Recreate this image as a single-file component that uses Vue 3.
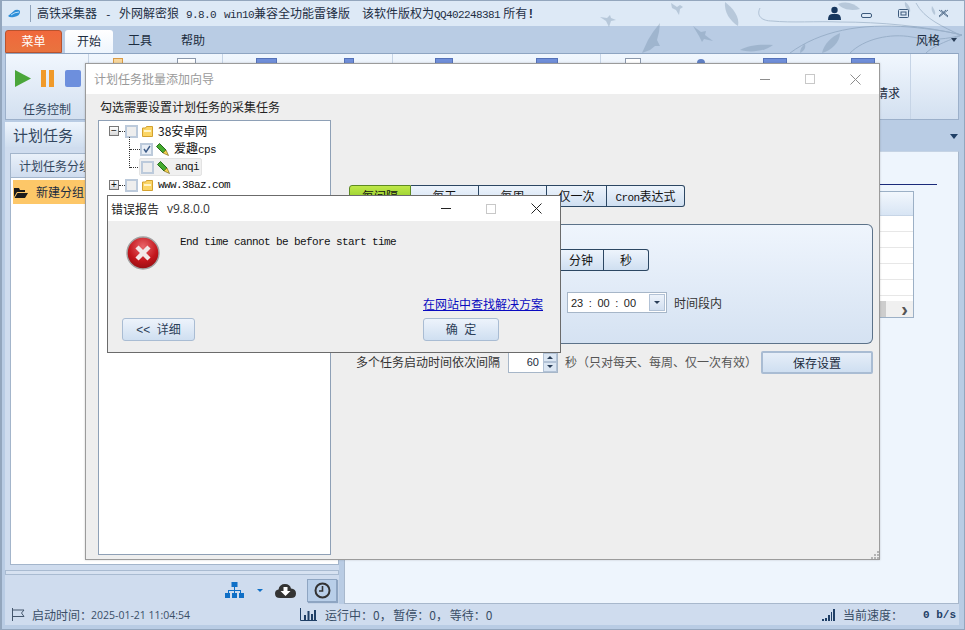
<template>
  <div class="app">
    <svg class="bg-art" width="365" height="53" viewBox="600 0 365 53">
      <g fill="#6f8aa6" opacity="0.34">
        <path d="M600 17 l7 1 l3 -3 l1 3 l5 2 l-5 1 l-2 6 l-3 -6 z" />
        <path d="M671 3 l6 4 l3 -2 l3 2 l-3 2 l-1 6 l-3 -5 l-4 -2 z" />
        <path d="M660 23 l-7 9 l-5 8 l-6 13 l8 -3 l5 -4 l5 0 l-3 -6 l2 -8 z" />
        <path d="M693 26 l8 6 l5 -1 l-1 4 l8 6 l-9 -2 l-2 3 l-3 -6 z" />
        <path d="M725 2 c8 6 15 15 13 24 c-8 -5 -14 -14 -13 -24 z" />
        <path d="M740 50 c8 -5 22 -6 33 -5 c-7 6 -22 8 -33 5 z" />
        <path d="M822 53 c2 -9 9 -16 18 -20 c0 9 -8 17 -18 20 z" />
        <path d="M838 4 c8 -3 16 -1 22 5 c-8 2 -17 1 -22 -5 z" />
        <path d="M905 2 c3 2 6 6 5 10 c-3 -2 -6 -6 -5 -10 z" />
        <path d="M932 6 c2 3 4 6 3 9 c-3 -2 -4 -6 -3 -9 z" />
        <path d="M800 53 c0 -4 2 -7 5 -9 c1 4 -1 7 -5 9 z" />
      </g>
      <g fill="none" stroke="#6f8aa6" stroke-width="1" opacity="0.42">
        <path d="M760 8 c-4 8 2 13 12 13 c20 2 44 0 68 1 c40 0 84 4 122 13" />
        <path d="M790 53 c30 -22 70 -30 120 -26 c20 2 36 4 52 8" />
        <path d="M850 53 c14 -14 40 -20 62 -16 c20 4 36 2 50 -2" />
        <path d="M960 35 c-16 -8 -36 -16 -44 -32" />
        <path d="M962 35 c-20 8 -30 12 -36 18" />
      </g>
    </svg>

    <header class="titlebar">
      <svg class="logo" width="14" height="10" viewBox="0 0 14 10">
        <path d="M1 7 L8 1 Q13 0 13 3 Q13 7 7 8 Q3 9 1 7 Z" fill="#2f8fd8" />
        <path d="M4 6 Q8 3 12 3" stroke="#bfe2fa" fill="none" />
      </svg>
      <span class="title-div"></span>
      <span class="title-text">高铁采集器<span class="mono dash">-</span>外网解密狼<span class="mono ver">9.8.0</span><span class="mono win">win10</span>兼容全功能雷锋版<span class="copy">该软件版权为</span><span class="mono">QQ402248381</span><span class="owner">所有</span><span class="bang">!</span></span>
      <svg class="user" width="13" height="15" viewBox="0 0 13 15">
        <circle cx="6.5" cy="4" r="3.2" fill="#17375e" />
        <path d="M0 14 Q0 8 4 8 L9 8 Q13 8 13 14 Z" fill="#17375e" />
      </svg>
      <svg class="sys-btn min" width="11" height="6" viewBox="0 0 11 6"><rect x="0.5" y="0.5" width="10" height="4" rx="1.5" fill="none" stroke="#3c5a7c" /></svg>
      <svg class="sys-btn restore" width="11" height="9" viewBox="0 0 11 9"><rect x="0.5" y="0.5" width="10" height="8" rx="1" fill="none" stroke="#3c5a7c" /><rect x="3" y="3" width="5" height="3" fill="none" stroke="#3c5a7c" /></svg>
      <svg class="sys-btn close" width="11" height="9" viewBox="0 0 11 9"><path d="M1 1 L10 8 M10 1 L1 8 M3 1 L10 7 M8 1 L1 7" stroke="#5b7592" fill="none" /></svg>
    </header>

    <nav class="tabs">
      <span class="tab-menu">菜单</span>
      <span class="tab-on">开始</span>
      <span class="tab-plain tools">工具</span>
      <span class="tab-plain help">帮助</span>
      <span class="style-menu">风格</span>
      <span class="caret"></span>
    </nav>

    <section class="ribbon">
      <div class="rb-group first">
        <div class="ctrl-icons">
          <svg width="16" height="17" viewBox="0 0 16 17"><path d="M0 0 L16 8.5 L0 17 Z" fill="#4aa63a" /></svg>
          <svg width="14" height="17" viewBox="0 0 14 17"><rect width="5" height="17" fill="#f09a2a" /><rect x="8" width="5" height="17" fill="#f09a2a" /></svg>
          <span class="stop"></span>
        </div>
        <div class="rb-label">任务控制</div>
      </div>
      <div v-for="g in groups" :key="g.id" class="rb-group" :style="{ width: g.width + 'px' }">
        <span
          v-for="t in g.tools"
          :key="t.left"
          class="tool"
          :class="t.kind"
          :style="{ marginLeft: t.gap + 'px', width: t.width + 'px' }"
        ></span>
        <span v-if="g.text" class="rb-text">{{ g.text }}</span>
      </div>
      <div class="rb-group last"></div>
    </section>

    <div class="workspace">
      <aside class="left-col">
        <div class="sec-title">计划任务</div>
        <div class="left-tab">计划任务分组</div>
        <div class="left-list">
          <div class="group-row">
            <svg width="14" height="11" viewBox="0 0 14 11"><path d="M0 1 L5 1 L6 3 L11 3 L11 5 L3 5 L0 10 Z M3.5 6 L14 6 L11 11 L0.5 11 Z" fill="#1b1b1b" /></svg>
            <span>新建分组</span>
          </div>
        </div>
        <div class="splitter"></div>
        <div class="left-tools">
          <svg width="19" height="17" viewBox="0 0 19 17" fill="#0f6fc6">
            <rect x="6.5" y="0" width="6" height="5" />
            <path d="M9 5 h1 v3 h6 v3 h-1 v-2 h-5 v2 h-1 v-2 h-5 v2 h-1 v-3 h6 z" />
            <rect x="0" y="11" width="5" height="5" /><rect x="7" y="11" width="5" height="5" /><rect x="14" y="11" width="5" height="5" />
          </svg>
          <span class="mini-caret"></span>
          <svg width="21" height="15" viewBox="0 0 21 15">
            <path d="M5 15 Q0 15 0 10.5 Q0 7 3.5 6.5 Q4.5 1 10 1 Q15 1 16 5.5 Q21 6 21 10.5 Q21 15 16 15 Z" fill="#333" />
            <path d="M8.5 4 h4 v4 h3 l-5 5 l-5 -5 h3 z" fill="#fff" />
          </svg>
          <span class="clock-btn">
            <svg width="17" height="17" viewBox="0 0 17 17">
              <circle cx="8.5" cy="8.5" r="7" fill="none" stroke="#333" stroke-width="2" />
              <path d="M8.5 4 V9 H5" fill="none" stroke="#333" stroke-width="1.6" />
            </svg>
          </span>
        </div>
      </aside>
      <main class="right-col">
        <div class="right-head"><span class="head-caret"></span></div>
        <div class="right-panel">
          <div class="navy-line"></div>
          <div class="grid-box">
            <div class="grid-head"></div>
            <div v-for="n in 5" :key="n" class="grid-row"></div>
            <div class="grid-fill"></div>
            <div class="grid-scroll"><span class="scroll-thumb"></span><span class="scroll-arrow">›</span></div>
          </div>
        </div>
      </main>
    </div>

    <footer class="statusbar">
      <svg class="st-flag" width="14" height="13" viewBox="0 0 14 13"><path d="M1.5 0 V13 M1.5 2 H13 L10.5 5 L13 8.5 H1.5" fill="none" stroke="#44566c" /></svg>
      <span class="st-label">启动时间：</span>
      <span class="st-date">2025-01-21 11:04:54</span>
      <svg class="st-chart" width="17" height="13" viewBox="0 0 17 13"><path d="M0.5 0 V12.5 H17" fill="none" stroke="#1f3f66" /><path d="M4 7 h2 v5 h-2 z M7.5 3 h2 v9 h-2 z M11 6 h2 v6 h-2 z M14 2 h2 v10 h-2 z" fill="#1f3f66" /></svg>
      <span class="st-run">运行中：0， 暂停：0， 等待：0</span>
      <svg class="st-signal" width="13" height="12" viewBox="0 0 13 12"><path d="M0 10 h2 v2 h-2 z M3 9 h2 v3 h-2 z M6 6 h2 v6 h-2 z M9 3 h1 v9 h-1 z M11 0 h2 v12 h-2 z" fill="#1f3f66" /></svg>
      <span class="st-speed">当前速度：</span>
      <span class="st-rate">0 b/s</span>
    </footer>
    <div class="bottom-strip"></div>

    <!-- 批量添加向导 -->
    <div class="wizard">
      <div class="wiz-title">
        <span class="wiz-name">计划任务批量添加向导</span>
        <span class="win-min faded"></span>
        <span class="win-max faded"></span>
        <svg class="win-x" width="11" height="11" viewBox="0 0 11 11"><path d="M0.5 0.5 L10.5 10.5 M10.5 0.5 L0.5 10.5" stroke="#8d8d8d" fill="none" /></svg>
      </div>
      <div class="wiz-body">
        <div class="wiz-hint">勾选需要设置计划任务的采集任务</div>
        <div class="wiz-main">
          <div class="tree">
            <span class="tree-line"></span>
            <div class="tree-row">
              <span class="expander">−</span><span class="dots"></span><span class="check"></span>
              <svg class="folder" width="11" height="11" viewBox="0 0 11 11"><path d="M0.5 2 H3.5 L4.5 0.5 H10.5 V10.5 H0.5 Z" fill="#fbd564" stroke="#d3a12f" /><path d="M2 4 H9 V6 H2 Z" fill="#fff4c8" /></svg>
              <span class="node-text">38安卓网</span>
            </div>
            <div class="tree-row child">
              <span class="dots wide"></span><span class="check on">
                <svg width="8" height="8" viewBox="0 0 8 8"><path d="M1 4 L3 7 L7 1" fill="none" stroke="#3d5c88" stroke-width="1.4" /></svg>
              </span>
              <svg class="pencil" width="13" height="13" viewBox="0 0 13 13"><path d="M0.5 3.5 L3.5 0.5 L10 7 L7 10 Z" fill="#45ab2e" stroke="#17600f" stroke-width="0.9" /><path d="M7 10 L10 7 L12.5 12.5 Z" fill="#f6d54e" stroke="#7d6a20" stroke-width="0.7" /></svg>
              <span class="node-text">爱趣<span class="mono">cps</span></span>
            </div>
            <div class="tree-row child selected">
              <span class="dots wide"></span>
              <span class="sel-box">
                <span class="check"></span>
                <svg class="pencil" width="13" height="13" viewBox="0 0 13 13"><path d="M0.5 3.5 L3.5 0.5 L10 7 L7 10 Z" fill="#45ab2e" stroke="#17600f" stroke-width="0.9" /><path d="M7 10 L10 7 L12.5 12.5 Z" fill="#f6d54e" stroke="#7d6a20" stroke-width="0.7" /></svg>
                <span class="node-text mono">anqi</span>
              </span>
            </div>
            <div class="tree-row">
              <span class="expander">+</span><span class="dots"></span><span class="check"></span>
              <svg class="folder" width="11" height="11" viewBox="0 0 11 11"><path d="M0.5 2 H3.5 L4.5 0.5 H10.5 V10.5 H0.5 Z" fill="#fbd564" stroke="#d3a12f" /><path d="M2 4 H9 V6 H2 Z" fill="#fff4c8" /></svg>
              <span class="node-text mono">www.38az.com</span>
            </div>
          </div>
          <div class="sched">
            <div class="seg-row">
              <span class="seg active w62">每间隔</span>
              <span class="seg w68">每天</span>
              <span class="seg w68">每周</span>
              <span class="seg w60">仅一次</span>
              <span class="seg w78"><span class="mono">Cron</span>表达式</span>
            </div>
            <div class="sched-panel">
              <div class="unit-row">
                <span class="seg w45">天</span>
                <span class="seg w45">小时</span>
                <span class="seg w45">分钟</span>
                <span class="seg w45">秒</span>
              </div>
              <div class="time-row">
                <span class="time-input">
                  <span class="time-val">23 : 00 : 00</span>
                  <span class="time-drop"><i></i></span>
                </span>
                <span class="time-text">时间段内</span>
              </div>
            </div>
            <div class="delay-row">
              <span class="delay-label">多个任务启动时间依次间隔</span>
              <span class="spin">
                <span class="spin-val">60</span>
                <span class="spin-btns"><b class="up"></b><b class="down"></b></span>
              </span>
              <span class="delay-note">秒（只对每天、每周、仅一次有效）</span>
              <span class="save-btn">保存设置</span>
            </div>
          </div>
        </div>
      </div>
      <svg class="grip" width="9" height="9" viewBox="0 0 9 9" fill="#b4b4b4"><rect x="7" y="1" width="2" height="2" /><rect x="4" y="4" width="2" height="2" /><rect x="7" y="4" width="2" height="2" /><rect x="1" y="7" width="2" height="2" /><rect x="4" y="7" width="2" height="2" /><rect x="7" y="7" width="2" height="2" /></svg>
    </div>

    <!-- 错误报告 -->
    <div class="err">
      <div class="err-title">
        <span class="err-name">错误报告</span>
        <span class="err-ver">v9.8.0.0</span>
        <span class="win-min"></span>
        <span class="win-max"></span>
        <svg class="win-x" width="11" height="11" viewBox="0 0 11 11"><path d="M0.5 0.5 L10.5 10.5 M10.5 0.5 L0.5 10.5" stroke="#222" fill="none" /></svg>
      </div>
      <div class="err-body">
        <div class="err-msg-row">
          <svg class="err-icon" width="34" height="34" viewBox="0 0 34 34">
            <defs>
              <radialGradient id="errFill" cx="50%" cy="30%" r="75%">
                <stop offset="0%" stop-color="#e9656a" />
                <stop offset="60%" stop-color="#c3161c" />
                <stop offset="100%" stop-color="#8e0d12" />
              </radialGradient>
            </defs>
            <circle cx="17" cy="17" r="16" fill="url(#errFill)" stroke="#a2a2a2" stroke-width="1.4" />
            <path d="M11 11 L23 23 M23 11 L11 23" stroke="#f2e9e9" stroke-width="4.4" />
          </svg>
          <span class="err-msg">End time cannot be before start time</span>
        </div>
        <a class="err-link">在网站中查找解决方案</a>
        <div class="err-btns">
          <span class="dlg-btn detail"><span class="chev">&lt;&lt;</span> 详细</span>
          <span class="dlg-btn ok">确 定</span>
        </div>
      </div>
    </div>
  </div>
</template>

<script setup>
const groups = [
  { id: 2, width: 134, tools: [{ left: 112, gap: 24, width: 10, kind: 'orange' }, { left: 176, gap: 54, width: 19, kind: 'doc' }] },
  { id: 3, width: 170, tools: [{ left: 255, gap: 33, width: 21, kind: 'blue' }, { left: 343, gap: 67, width: 10, kind: 'blue' }] },
  { id: 4, width: 208, tools: [{ left: 434, gap: 42, width: 18, kind: 'blue' }, { left: 535, gap: 83, width: 22, kind: 'blue' }] },
  {
    id: 5,
    width: 310,
    text: '请求',
    tools: [
      { left: 624, gap: 24, width: 16, kind: 'doc' },
      { left: 696, gap: 56, width: 8, kind: 'dome' },
      { left: 762, gap: 58, width: 24, kind: 'blue' },
      { left: 850, gap: 64, width: 24, kind: 'blue' }
    ]
  }
]
</script>

<style>
html, body { margin: 0; background: #b9cce4; }
</style>

<style scoped>
* { box-sizing: border-box; }

.app {
  position: relative;
  width: 965px;
  height: 630px;
  overflow: hidden;
  display: flex;
  flex-direction: column;
  background: #b9cce4;
  border: 1px solid #93a6bd;
  border-width: 1px 1px 1px 2px;
  font: 12px/16px "Noto Sans CJK SC", "Liberation Sans", sans-serif;
  color: #1c2c40;
}

.mono {
  font-family: "Liberation Mono", monospace;
  font-size: 11px;
  letter-spacing: -0.6px;
  white-space: pre;
}

.bg-art {
  position: absolute;
  left: 598px;
  top: -1px;
  z-index: 1;
}

.titlebar {
  height: 25px;
  flex: none;
  display: flex;
  align-items: center;
  padding-right: 15px;
  background: #dde9f6;
}
.logo { margin-left: 5px; }
.title-div { width: 1px; height: 17px; margin-left: 9px; background: #8ea2ba; }
.title-text { margin-left: 6px; white-space: nowrap; color: #1f2f44; }
.dash { margin: 0 8px 0 8px; }
.ver { margin-left: 7px; }
.win { margin-left: 8px; }
.copy { margin-left: 12px; }
.owner { margin-left: 3px; }
.bang { font: bold 12px "Liberation Mono", monospace; }
.user { margin-left: auto; z-index: 2; }
.sys-btn { z-index: 2; }
.min { margin-left: 20px; margin-top: 5px; }
.restore { margin-left: 26px; }
.close { margin-left: 29px; }

.tabs {
  height: 27px;
  flex: none;
  display: flex;
  align-items: flex-end;
  background: #b9cce4;
  padding-left: 3px;
}
.tab-menu {
  width: 57px;
  height: 23px;
  text-align: center;
  line-height: 20px;
  font-size: 12px;
  color: #fff;
  border: 1px solid #b8532f;
  border-radius: 3px 3px 0 0;
  background: linear-gradient(#f0683c, #e9733e);
}
.tab-on {
  width: 48px;
  height: 23px;
  margin-left: 3px;
  text-align: center;
  line-height: 22px;
  background: linear-gradient(#ffffff, #eef5fd);
  border-radius: 3px 3px 0 0;
  z-index: 2;
}
.tab-plain { line-height: 24px; height: 25px; }
.tools { margin-left: 15px; }
.help { margin-left: 29px; }
.style-menu { margin-left: 711px; line-height: 24px; height: 25px; z-index: 2; }
.caret {
  margin: 0 0 11px 11px;
  border: 3px solid transparent;
  border-top: 4px solid #2a3e58;
  border-bottom: 0;
  z-index: 2;
}

.ribbon {
  position: relative;
  z-index: 2;
  height: 67px;
  flex: none;
  display: flex;
  margin: 0 5px 0 3px;
  border: 1px solid #9cb0ca;
  border-top-color: #8ea5c2;
  background: linear-gradient(#f1f7fe, #d3e0f0);
}
.rb-group {
  display: flex;
  align-items: flex-start;
  border-right: 1px solid #c6d4e6;
}
.rb-group.first {
  width: 83px;
  flex-direction: column;
  align-items: stretch;
}
.rb-group.last { flex: 1; border-right: 0; }
.ctrl-icons {
  display: flex;
  align-items: center;
  padding: 16px 0 0 9px;
  gap: 10px;
}
.stop { width: 16px; height: 17px; border-radius: 2px; background: #6d8fdd; }
.rb-label { margin-top: 14px; text-align: center; color: #33475f; }
.tool { height: 5px; margin-top: 4px; flex: none; }
.tool.blue { background: #6f8ed9; border: 1px solid #5572b8; border-bottom: 0; }
.tool.orange { background: #f8d79c; border: 1px solid #d99a45; border-bottom: 0; }
.tool.doc { background: #fff; border: 1px solid #8b98ac; border-bottom: 0; }
.tool.dome { background: #5f7fc4; border-radius: 4px 4px 0 0; margin-top: 5px; height: 4px; }
.rb-text { margin: 31px 0 0 1px; white-space: nowrap; }

.workspace {
  flex: 1;
  min-height: 0;
  display: flex;
  margin-top: 2px;
}
.left-col {
  width: 334px;
  flex: none;
  margin-left: 3px;
  display: flex;
  flex-direction: column;
  background: #cfdcee;
}
.sec-title {
  height: 25px;
  flex: none;
  padding-left: 8px;
  font-size: 15px;
  line-height: 26px;
  color: #33475f;
  background: linear-gradient(#eef5fd, #d0deef);
}
.left-tab {
  height: 24px;
  flex: none;
  margin: 6px 0 0 5px;
  padding-left: 8px;
  line-height: 23px;
  color: #33475f;
  background: linear-gradient(#eaf1fa, #cfdcee);
  border: 1px solid #a3b5cb;
  border-bottom: 0;
}
.left-list {
  flex: 1;
  min-height: 0;
  margin: 0 0 0 5px;
  padding: 2px;
  background: #fff;
  border: 1px solid #a3b5cb;
}
.group-row {
  display: flex;
  align-items: center;
  gap: 8px;
  height: 24px;
  padding-left: 1px;
  background: #fdc768;
}
.splitter {
  height: 5px;
  flex: none;
  margin: 5px 0 0;
  background: #d7e2f1;
  border: 1px solid #a9bbd1;
}
.left-tools {
  height: 29px;
  flex: none;
  display: flex;
  align-items: center;
  padding: 1px 0 0 220px;
}
.mini-caret {
  margin-left: 13px;
  border: 3px solid transparent;
  border-top: 3px solid #0f6fc6;
  border-bottom: 0;
}
.left-tools svg:nth-of-type(2) { margin-left: 12px; }
.clock-btn {
  display: flex;
  align-items: center;
  justify-content: center;
  width: 30px;
  height: 23px;
  margin-left: 11px;
  background: #b9cfe9;
  border: 1px solid #8ea5c2;
  box-shadow: 1px 1px 1px #8ea5c2;
}

.right-col {
  flex: 1;
  min-width: 0;
  display: flex;
  flex-direction: column;
  margin-left: 5px;
  margin-right: 5px;
}
.right-head {
  height: 29px;
  flex: none;
  display: flex;
  align-items: center;
  justify-content: flex-end;
  padding-right: 1px;
}
.head-caret {
  border: 4px solid transparent;
  border-top: 5px solid #1f3f66;
  border-bottom: 0;
}
.right-panel {
  flex: 1;
  min-height: 0;
  padding-top: 32px;
  background: #eef5fd;
  border: 1px solid #a8b8cc;
  border-top-color: #c5d3e4;
}
.navy-line { height: 1px; margin: 0 21px 0 20px; background: #1a2a7a; }
.grid-box {
  height: 127px;
  margin: 6px 44px 0 200px;
  display: flex;
  flex-direction: column;
  border: 1px solid #9cb0c6;
  background: #fff;
}
.grid-head { height: 24px; flex: none; background: linear-gradient(#f2f7fd, #d8e5f4); border-bottom: 1px solid #c7d5e6; }
.grid-row { height: 16px; flex: none; border-bottom: 1px solid #e7e7e7; }
.grid-fill { flex: 1; }
.grid-scroll {
  height: 16px;
  flex: none;
  display: flex;
  justify-content: space-between;
  align-items: center;
  background: #f0f0f0;
}
.scroll-thumb { width: 340px; height: 100%; background: #cdcdcd; }
.scroll-arrow {
  padding-right: 5px;
  font: bold 20px/14px "Liberation Sans", sans-serif;
  color: #555;
}

.statusbar {
  height: 21px;
  flex: none;
  display: flex;
  align-items: center;
  margin-right: 5px;
  margin-left: 3px;
  white-space: nowrap;
  background: #cfdcee;
  color: #3a4e66;
}
.st-flag { margin-left: 6px; flex: none; }
.st-label { margin-left: 7px; width: 59px; flex: none; }
.st-date { width: 209px; flex: none; font: 10.5px "Open Sans", sans-serif; color: #3a4e66; }
.st-chart { flex: none; }
.st-run { margin-left: 8px; width: 497px; flex: none; word-spacing: -1px; }
.st-signal { flex: none; }
.st-speed { margin-left: 8px; width: 80px; flex: none; }
.st-rate { font: bold 11px "Liberation Mono", monospace; color: #1f3f66; }
.bottom-strip { height: 4px; flex: none; background: #b9cce4; }

.wizard {
  position: absolute;
  z-index: 5;
  left: 83px;
  top: 62px;
  width: 795px;
  height: 497px;
  display: flex;
  flex-direction: column;
  background: #eee;
  border: 1px solid #9b9b9b;
  box-shadow: 0 0 2px rgba(70, 70, 70, 0.25);
}
.wiz-title {
  height: 30px;
  flex: none;
  display: flex;
  align-items: center;
  padding-left: 8px;
  background: #fff;
}
.wiz-name { color: #9a9a9a; width: 666px; flex: none; }
.win-min { width: 10px; height: 1px; flex: none; background: #222; }
.win-min.faded { background: #8d8d8d; }
.win-max { width: 10px; height: 10px; flex: none; margin-left: 35px; border: 1px solid #c8c8c8; }
.win-x { margin-left: 35px; flex: none; }
.wiz-body { flex: 1; min-height: 0; display: flex; flex-direction: column; padding: 5px 0 4px 12px; }
.wiz-hint { margin-left: 2px; height: 21px; line-height: 16px; color: #222; }
.wiz-main { flex: 1; min-height: 0; display: flex; }

.tree {
  position: relative;
  width: 233px;
  flex: none;
  padding: 1px 0 0 10px;
  background: #fff;
  border: 1px solid #8ea0b6;
  color: #111;
}
.tree-line {
  position: absolute;
  left: 30px;
  top: 16px;
  width: 0;
  height: 31px;
  border-left: 1px dotted #333;
}
.tree-row { height: 18px; display: flex; align-items: center; }
.tree-row.child { padding-left: 20px; }
.expander {
  width: 10px;
  height: 10px;
  flex: none;
  text-align: center;
  font: 10px/8px "Liberation Sans", sans-serif;
  color: #111;
  background: linear-gradient(#fff, #d8d8d8);
  border: 1px solid #777;
}
.dots { width: 6px; height: 0; flex: none; border-top: 1px dotted #333; }
.dots.wide { width: 10px; margin-left: 1px; }
.check {
  width: 13px;
  height: 13px;
  flex: none;
  display: flex;
  align-items: center;
  justify-content: center;
  background: #eeeeee;
  border: 2px solid #bccadb;
}
.check.on { background: #e8eef6; }
.folder { margin-left: 4px; }
.pencil { margin-left: 3px; }
.node-text { margin-left: 5px; white-space: nowrap; }
.sel-box {
  display: flex;
  align-items: center;
  height: 18px;
  width: 63px;
  margin-left: -1px;
  padding-left: 1px;
  background: #f0f0f0;
  border: 1px solid #e3e3e3;
  border-radius: 2px;
}

.sched { flex: 1; min-width: 0; padding: 65px 0 0 14px; }
.seg-row { display: flex; height: 22px; margin-left: 4px; }
.seg {
  height: 22px;
  flex: none;
  text-align: center;
  line-height: 20px;
  color: #111;
  background: linear-gradient(#edf4fc, #cfdff1);
  border: 1px solid #2c4763;
  border-left-width: 0;
}
.seg:first-child { border-left-width: 1px; border-radius: 3px 0 0 3px; }
.seg:last-child { border-radius: 0 3px 3px 0; }
.seg.active { background: linear-gradient(#bfe848, #7fbf20); border-color: #5d8a22; }
.w45 { width: 45px; }
.w60 { width: 60px; }
.w62 { width: 62px; }
.w68 { width: 68px; }
.w78 { width: 78px; }

.sched-panel {
  width: 528px;
  height: 120px;
  margin-top: 17px;
  padding: 24px 0 0 124px;
  background: linear-gradient(#eff5fd, #d5e2f2);
  border: 1px solid #5c7289;
  border-left-width: 0;
  border-radius: 0 6px 6px 0;
}
.unit-row { display: flex; }
.time-row {
  display: flex;
  align-items: center;
  margin: 21px 0 0 98px;
}
.time-input {
  width: 100px;
  height: 21px;
  display: flex;
  align-items: center;
  justify-content: space-between;
  padding: 0 1px 0 3px;
  background: #fff;
  border: 1px solid #a6b6c8;
}
.time-val { font: 11px "Liberation Sans", sans-serif; word-spacing: 2.5px; color: #222; }
.time-drop {
  width: 16px;
  height: 17px;
  display: flex;
  align-items: center;
  justify-content: center;
  background: linear-gradient(#edf3fb, #d2dff0);
  border: 1px solid #b2c2d6;
}
.time-drop i { border: 3px solid transparent; border-top: 3px solid #2a3e58; border-bottom: 0; }
.time-text { margin-left: 7px; color: #333; }

.delay-row {
  display: flex;
  align-items: center;
  height: 24px;
  margin-top: 6px;
  padding-left: 11px;
}
.delay-label { width: 152px; flex: none; color: #333; }
.spin {
  width: 50px;
  height: 21px;
  flex: none;
  display: flex;
  background: #fff;
  border: 1px solid #a6b6c8;
}
.spin-val { flex: 1; text-align: right; padding-right: 4px; font: 11px/19px "Liberation Sans", sans-serif; }
.spin-btns { width: 14px; display: flex; flex-direction: column; }
.spin-btns b {
  flex: 1;
  display: flex;
  align-items: center;
  justify-content: center;
  background: #dbe6f3;
  border: 1px solid #b2c2d6;
}
.spin-btns b::after { content: ""; border: 3px solid transparent; }
.up::after { border-bottom-color: #2a3e58 !important; border-top: 0 !important; }
.down::after { border-top-color: #2a3e58 !important; border-bottom: 0 !important; }
.delay-note { margin-left: 7px; width: 196px; flex: none; white-space: nowrap; color: #555; }
.save-btn {
  width: 112px;
  height: 23px;
  flex: none;
  text-align: center;
  line-height: 20px;
  background: linear-gradient(#e6eef8, #cfdff1);
  border: 2px solid #a9bcd3;
  border-radius: 2px;
}
.grip { position: absolute; right: 0; bottom: 0; }

.err {
  position: absolute;
  z-index: 6;
  left: 105px;
  top: 194px;
  width: 454px;
  height: 158px;
  display: flex;
  flex-direction: column;
  background: #eee;
  border: 1px solid #6b6b6b;
}
.err-title {
  height: 25px;
  flex: none;
  display: flex;
  align-items: center;
  padding-left: 3px;
  background: #fff;
}
.err-name { color: #222; flex: none; white-space: nowrap; }
.err-ver { margin-left: 8px; width: 274px; flex: none; font: 12px "Open Sans", sans-serif; color: #333; }
.err-body { flex: 1; min-height: 0; display: flex; flex-direction: column; }
.err-msg-row { display: flex; align-items: flex-start; height: 76px; padding: 15px 0 0 18px; }
.err-icon { flex: none; }
.err-msg {
  margin: -2px 0 0 20px;
  font: 11px/16px "Liberation Mono", monospace;
  letter-spacing: -0.6px;
  color: #111;
}
.err-link {
  margin-left: 315px;
  width: 120px;
  height: 14px;
  line-height: 14px;
  color: #0a0ac0;
  text-decoration: underline;
  white-space: nowrap;
}
.err-btns { display: flex; margin-top: 7px; padding-left: 14px; }
.dlg-btn {
  height: 23px;
  text-align: center;
  line-height: 20px;
  color: #2c4058;
  background: linear-gradient(#edf3fb, #cfdff1);
  border: 1px solid #a9bcd3;
  border-radius: 3px;
  word-spacing: 4px;
}
.detail { width: 73px; }
.chev { font: 12px "Liberation Sans", sans-serif; }
.ok { width: 76px; margin-left: 228px; }
</style>
